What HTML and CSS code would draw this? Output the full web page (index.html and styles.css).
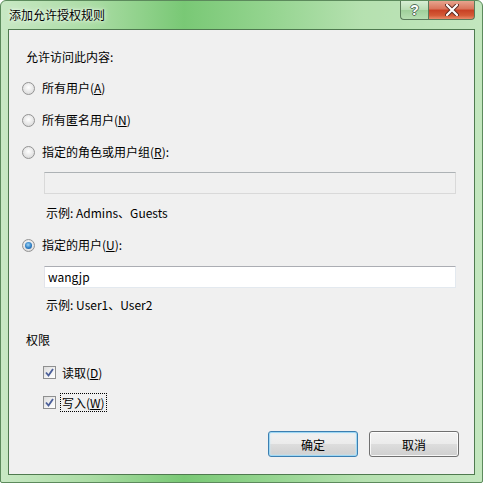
FILE: index.html
```html
<!DOCTYPE html>
<html lang="zh-CN">
<head>
<meta charset="utf-8">
<link rel="stylesheet" href="styles.css">
</head>
<body>
<div class="window">
  <div class="titlebar">
    <span class="title">添加允许授权规则</span>
    <div class="caption-btns">
      <div class="cbtn help"><span>?</span></div>
      <div class="cbtn close"><svg width="14" height="12" viewBox="0 0 14 12"><path d="M2 1 L12 11 M12 1 L2 11" stroke="#5a2a20" stroke-width="4" stroke-linecap="round"/><path d="M2 1 L12 11 M12 1 L2 11" stroke="#fff" stroke-width="2.2" stroke-linecap="round"/></svg></div>
    </div>
  </div>
  <div class="client">
    <div class="row label first">允许访问此内容:</div>
    <div class="row opt r1"><span class="radio"></span><span>所有用户(<u>A</u>)</span></div>
    <div class="row opt r2"><span class="radio"></span><span>所有匿名用户(<u>N</u>)</span></div>
    <div class="row opt r2"><span class="radio"></span><span>指定的角色或用户组(<u>R</u>):</span></div>
    <div class="field disabled i1"></div>
    <div class="row example e1">示例: Admins、Guests</div>
    <div class="row opt r4"><span class="radio checked"></span><span>指定的用户(<u>U</u>):</span></div>
    <div class="field i2">wangjp</div>
    <div class="row example e2">示例: User1、User2</div>
    <div class="row label perm">权限</div>
    <div class="row chk c1"><span class="checkbox"><svg width="9" height="9" viewBox="0 0 9 9"><path d="M1 4.5 L3.5 7.5 L8 1" fill="none" stroke="#4b5f99" stroke-width="1.8"/></svg></span><span class="ctext">读取(<u>D</u>)</span></div>
    <div class="row chk c2"><span class="checkbox"><svg width="9" height="9" viewBox="0 0 9 9"><path d="M1 4.5 L3.5 7.5 L8 1" fill="none" stroke="#4b5f99" stroke-width="1.8"/></svg></span><span class="ctext focus">写入(<u>W</u>)</span></div>
    <div class="buttons">
      <div class="btn default">确定</div>
      <div class="btn">取消</div>
    </div>
  </div>
</div>
</body>
</html>
```

FILE: styles.css
```css
html, body {
  margin: 0;
  padding: 0;
  width: 483px;
  height: 483px;
  overflow: hidden;
  background: #ffffff;
}
.window {
  width: 483px;
  height: 483px;
  box-sizing: border-box;
  border: 1px solid #5c8a5c;
  border-radius: 6px 6px 2px 2px;
  background:
    linear-gradient(90deg, rgba(255,255,255,0.4) 0%, rgba(255,255,255,0.1) 18%, rgba(70,180,70,0.45) 38%, rgba(110,200,110,0.3) 55%, rgba(255,255,255,0.2) 75%, rgba(255,255,255,0.35) 100%),
    #a3d99c;
  padding: 0 7px 7px 7px;
  display: flex;
  flex-direction: column;
  font-family: "Noto Sans CJK SC", "Noto Sans", sans-serif;
  font-size: 12px;
  color: #000;
}
.titlebar {
  height: 28px;
  display: flex;
  align-items: flex-start;
  justify-content: space-between;
  flex: none;
}
.title {
  margin-top: 6px;
  margin-left: 1px;
  line-height: 16px;
  text-shadow: 0 0 6px #f4fff2, 0 0 3px #ffffff;
}
.caption-btns {
  display: flex;
}
.cbtn {
  height: 19px;
  box-sizing: border-box;
  border: 1px solid #5a7a5a;
  border-top: none;
  display: flex;
  align-items: center;
  justify-content: center;
}
.help {
  width: 28px;
  border-radius: 0 0 0 4px;
  background: linear-gradient(#d7eed4, #b8dcb3 50%, #9fcf9a 51%, #b6deb1);
  font-family: "Liberation Sans", sans-serif;
  font-weight: bold;
  font-size: 14px;
  color: #ffffff;
  text-shadow: 1px 0 0 #55705a, -1px 0 0 #55705a, 0 1px 0 #55705a, 0 -1px 0 #55705a;
  border-right: none;
}
.close {
  width: 47px;
  border-radius: 0 0 4px 0;
  background: linear-gradient(#e7a48e, #d9735a 45%, #c74024 50%, #d45a36 80%, #e88b6a);
}
.client {
  flex: 1;
  border: 1px solid #4f7a4f;
  background: #f0f0f0;
  display: flex;
  flex-direction: column;
  padding-left: 13px;
}
.row {
  height: 20px;
  line-height: 20px;
  display: flex;
  align-items: center;
  white-space: nowrap;
}
.label { margin-left: 4px; }
.first { margin-top: 17px; }
.opt { gap: 7px; }
.r1 { margin-top: 11px; }
.r2 { margin-top: 12px; }
.r4 { margin-top: 12px; }
.radio {
  width: 13px;
  height: 13px;
  box-sizing: border-box;
  border-radius: 50%;
  border: 1px solid #939393;
  background: radial-gradient(circle at 50% 40%, #ffffff 0%, #e4e4e4 60%, #cfcfcf 100%);
  display: inline-flex;
  align-items: center;
  justify-content: center;
  flex: none;
}
.radio.checked::after {
  content: "";
  width: 7px;
  height: 7px;
  border-radius: 50%;
  background: radial-gradient(circle at 45% 40%, #9fd4f5 0%, #2e7fc4 55%, #1d4b8a 100%);
}
.field {
  margin-left: 22px;
  width: 412px;
  height: 22px;
  box-sizing: border-box;
  border: 1px solid #e3e9ef;
  border-top-color: #abadb3;
  border-left-color: #e2e3ea;
  background: #ffffff;
  line-height: 20px;
  padding-left: 3px;
}
.field.disabled {
  background: #f0f0f0;
  border-color: #d9d9d9;
  border-top-color: #adb2b5;
}
.i1 { margin-top: 10px; }
.i2 { margin-top: 11px; }
.example { margin-left: 24px; }
.e1 { margin-top: 9px; }
.e2 { margin-top: 7px; }
.perm { margin-top: 15px; }
.chk { margin-left: 21px; gap: 4px; }
.c1 { margin-top: 12px; }
.c2 { margin-top: 10px; }
.checkbox {
  width: 13px;
  height: 13px;
  box-sizing: border-box;
  border: 1px solid #8e8f8f;
  background: linear-gradient(135deg, #dcdcdc, #f4f4f4 60%, #ffffff);
  display: inline-flex;
  align-items: center;
  justify-content: center;
  flex: none;
}
.ctext {
  padding: 0 1px;
  line-height: 17px;
  border: 1px dotted transparent;
}
.ctext.focus { border-color: #000; }
.buttons {
  margin-top: auto;
  margin-bottom: 17px;
  display: flex;
  gap: 11px;
  justify-content: flex-end;
  padding-right: 15px;
}
.btn {
  width: 90px;
  height: 26px;
  box-sizing: border-box;
  border: 1px solid #707070;
  border-radius: 3px;
  background: linear-gradient(#f2f2f2 0%, #ebebeb 50%, #dddddd 51%, #cfcfcf 100%);
  box-shadow: inset 0 0 0 1px rgba(255,255,255,0.8);
  display: flex;
  align-items: center;
  justify-content: center;
}
.btn.default {
  border-color: #3c7fb1;
  box-shadow: inset 0 0 0 1px #9fd7f3, inset 0 0 2px 1px #c9ecfb;
}
```
